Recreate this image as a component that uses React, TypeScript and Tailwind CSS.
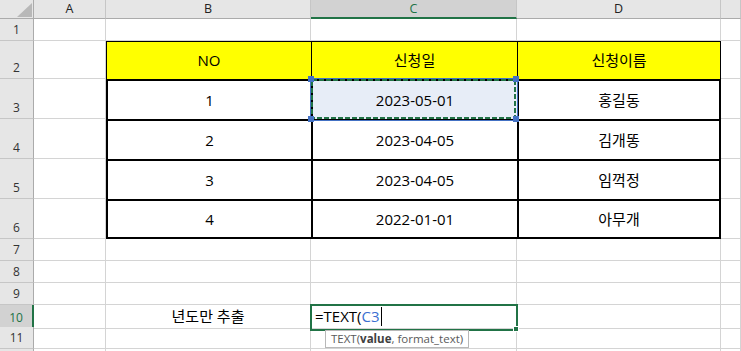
import type { ReactNode } from 'react';
import clsx from 'clsx';

const GRID = 'grid grid-cols-[34px_72px_205px_206px_204px_20px]';

const requests = [
    { no: '1', date: '2023-05-01', name: '홍길동' },
    { no: '2', date: '2023-04-05', name: '김개똥' },
    { no: '3', date: '2023-04-05', name: '임꺽정' },
    { no: '4', date: '2022-01-01', name: '아무개' },
];

const Blank = ({ children }: { children?: ReactNode }) => (
    <div className="flex items-center justify-center border-r border-b border-[#d4d4d4]">{children}</div>
);

const ColHead = ({ label, active }: { label: string; active?: boolean }) => (
    <div
        className={clsx(
            'flex items-center justify-center border-r border-r-[#c6c6c6] text-[12.5px] leading-[14px]',
            active
                ? 'bg-[#d2d2d2] border-b-2 border-b-[#217346] text-[#217346]'
                : 'bg-[#e6e6e6] border-b border-b-[#ababab] text-[#222] pb-[1px]'
        )}
    >
        {label}
    </div>
);

const Row = ({ h, n, active, children }: { h: string; n?: number; active?: boolean; children: ReactNode }) => (
    <div className={clsx(GRID, h)}>
        <div
            className={clsx(
                'flex items-end justify-center pb-[3px] border-b border-b-[#c6c6c6] text-[12px] leading-[14px]',
                active
                    ? 'bg-[#d2d2d2] text-[#217346] border-r-2 border-r-[#217346]'
                    : 'bg-[#e6e6e6] text-[#333] border-r border-r-[#ababab]'
            )}
        >
            {n}
        </div>
        {children}
    </div>
);

const EmptyCells = () => (
    <>
        <Blank />
        <Blank />
        <Blank />
        <Blank />
        <Blank />
    </>
);

// reference highlight + copy marquee around C3
const Marquee = () => (
    <svg className="pointer-events-none absolute -left-[7px] -top-[7px] z-10 overflow-visible" width="216" height="52">
        <rect x="4.5" y="4.5" width="207" height="42" fill="none" stroke="#4472c4" strokeWidth="1" />
        <rect x="6" y="6" width="203" height="38" fill="none" stroke="#217346" strokeWidth="2" strokeDasharray="5 2" />
        <rect x="2" y="2" width="6" height="6" fill="#4472c4" />
        <rect x="207" y="2" width="6" height="6" fill="#4472c4" />
        <rect x="2" y="42" width="6" height="6" fill="#4472c4" />
        <rect x="207" y="42" width="6" height="6" fill="#4472c4" />
    </svg>
);

const Sheet = () => {
    return (
        <div className="w-[741px] h-[351px] overflow-hidden bg-white text-black text-[15px] [font-family:'Open_Sans','Noto_Sans_CJK_KR',sans-serif]">
            <div className={clsx(GRID, 'h-[19px]')}>
                <div className="relative bg-[#e6e6e6] border-r border-b border-r-[#ababab] border-b-[#ababab]">
                    <svg className="absolute right-[1px] bottom-[1px]" width="15" height="14">
                        <polygon points="15,0 15,14 0,14" fill="#b8b8b8" />
                    </svg>
                </div>
                <ColHead label="A" />
                <ColHead label="B" />
                <ColHead label="C" active />
                <ColHead label="D" />
                <ColHead label="" />
            </div>

            <Row h="h-[22px]" n={1}>
                <EmptyCells />
            </Row>

            <Row h="h-[38px]" n={2}>
                <Blank />
                <div className="flex items-center justify-center bg-[#ffff00] border-t border-l border-black">NO</div>
                <div className="flex items-center justify-center bg-[#ffff00] border-t border-l border-black">신청일</div>
                <div className="flex items-center justify-center bg-[#ffff00] border-t border-l border-r border-black">신청이름</div>
                <Blank />
            </Row>

            {requests.map((r, i) => {
                const last = i === requests.length - 1;
                return (
                    <Row key={r.no} h="h-[40px]" n={i + 3}>
                        <Blank />
                        <div className={clsx('flex items-center justify-center border-t-2 border-l-2 border-black', last && 'border-b-2')}>
                            {r.no}
                        </div>
                        <div
                            className={clsx(
                                'relative flex items-center justify-center border-t-2 border-l-2 border-black',
                                last && 'border-b-2',
                                i === 0 && 'bg-[#e7edf7]'
                            )}
                        >
                            {r.date}
                            {i === 0 && <Marquee />}
                        </div>
                        <div
                            className={clsx('flex items-center justify-center border-t-2 border-l-2 border-r-2 border-black', last && 'border-b-2')}
                        >
                            {r.name}
                        </div>
                        <Blank />
                    </Row>
                );
            })}

            {[7, 8, 9].map((n) => (
                <Row key={n} h="h-[22px]" n={n}>
                    <EmptyCells />
                </Row>
            ))}

            <Row h="h-[22px]" n={10} active>
                <Blank />
                <Blank>년도만 추출</Blank>
                <div className="relative flex items-center pl-[4px] border-r border-b border-[#d4d4d4]">
                    <span>=TEXT(</span>
                    <span className="text-[#3b6fd1]">C3</span>
                    <span className="ml-px inline-block h-[19px] w-px bg-black" />
                    <div className="pointer-events-none absolute -left-[1px] -top-[1px] -right-[2px] -bottom-[3px] z-10 border-2 border-[#217346]">
                        <div className="absolute -right-[3px] -bottom-[3px] h-[6px] w-[6px] border border-white bg-[#217346]" />
                    </div>
                    <div className="absolute left-[14px] top-[25px] z-20 h-[18px] whitespace-nowrap border border-[#b8b8b8] bg-white px-[5px] text-[11.5px] leading-[16px] text-[#5a5a5a]">
                        TEXT(<span className="font-bold text-[#404040]">value</span>, format_text)
                    </div>
                </div>
                <Blank />
                <Blank />
            </Row>

            <Row h="h-[22px]" n={11}>
                <EmptyCells />
            </Row>

            {/* only the top edge of row 12 is in view */}
            <Row h="h-[22px]">
                <EmptyCells />
            </Row>
        </div>
    );
};

export default function App() {
    return <Sheet />;
}
